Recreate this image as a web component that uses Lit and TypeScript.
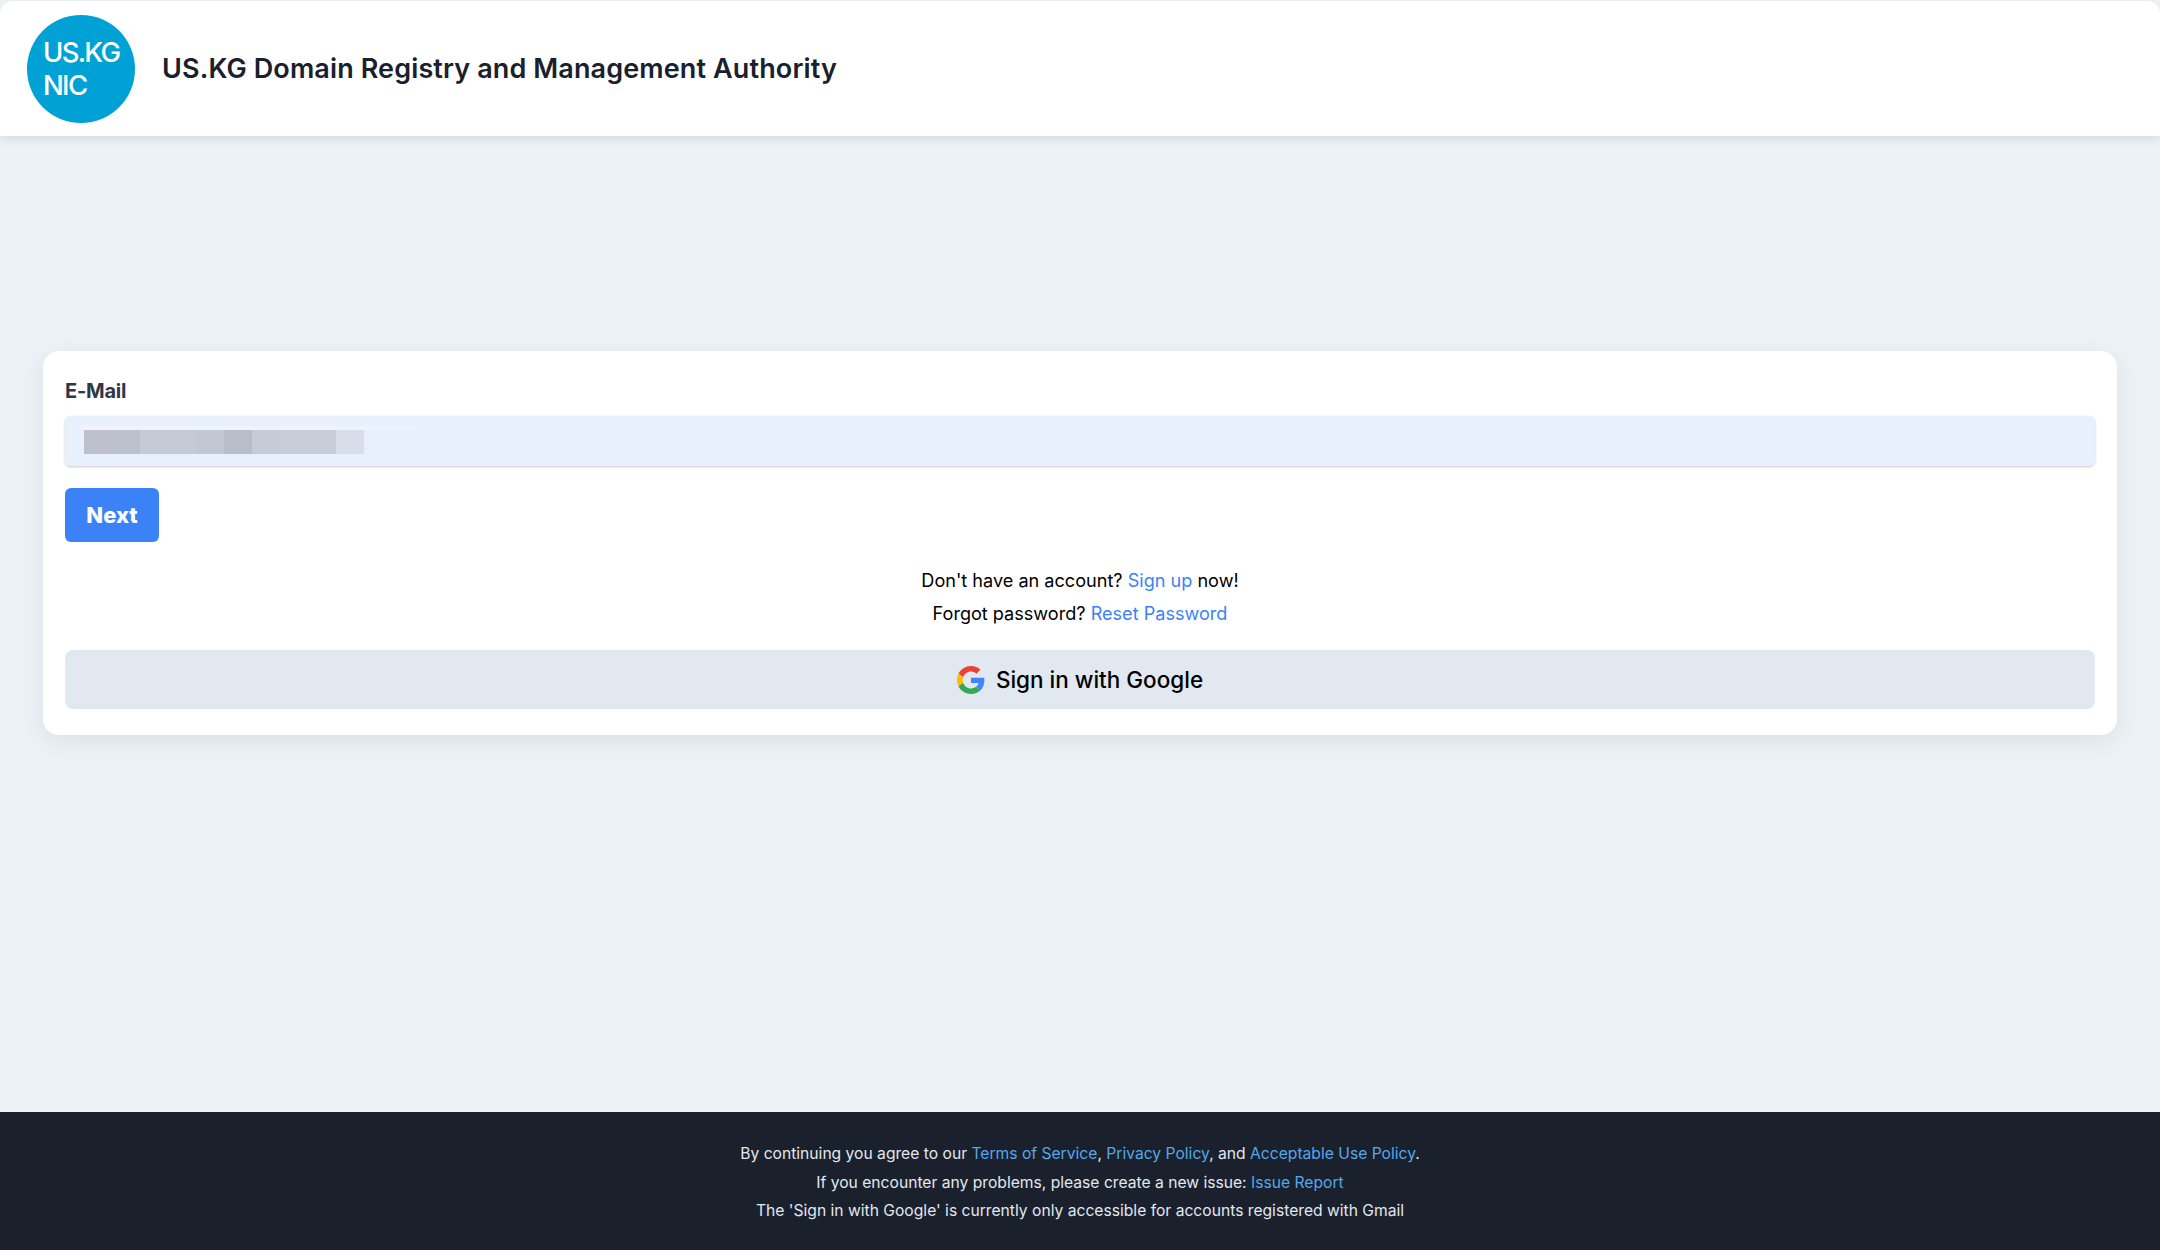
import { LitElement, html, css } from "lit";
import { customElement } from "lit/decorators.js";

const BLOCKS = ["#bec1cc","#bcc1cc","#c5cad6","#c5cad6","#c2c7d4","#b9bdc9","#c6cbd7","#c7ccd8","#c7ccd8","#d8ddea"];

@customElement("app-root")
export class AppRoot extends LitElement {
  static styles = css`
    :host { display: flex; flex-direction: column; height: 1250px; background: #edf2f7; font-family: Inter, "Open Sans", sans-serif; color: #000; overflow: hidden; }
    * { box-sizing: border-box; }
    a { text-decoration: none; }
    header { height: 135px; margin-top: 1px; background: #fff; border-radius: 12px 12px 0 0; display: flex; align-items: center; gap: 27px; padding: 0 27px; box-shadow: 0 4px 10px rgba(0,0,0,.09); flex: none; position: relative; }
    .logo { width: 108px; height: 108px; border-radius: 50%; background: #00a2d6; color: #fff; font-size: 27.5px; font-weight: 500; line-height: 33px; letter-spacing: -1.7px; padding: 21px 0 0 16px; flex: none; }
    h1 { margin: 0; font-size: 27px; font-weight: 600; color: #1a202c; letter-spacing: .12px; padding-bottom: 1px; }
    main { flex: 1; display: flex; align-items: flex-start; padding: 215px 43px 0; }
    .card { width: 100%; background: #fff; border-radius: 16px; padding: 27px 22px 26px; box-shadow: 0 6px 24px rgba(0,0,0,.08); }
    label { display: block; font-size: 20px; font-weight: 700; color: #2d3748; line-height: 27px; letter-spacing: -.25px; }
    .input { margin-top: 11px; height: 50px; background: #e8f0fe; border-radius: 6px; box-shadow: 0 1px 3px rgba(0,0,0,.22); padding: 10px 14px; }
    .red-top { width: 336px; height: 4px; background: #f0f3fb; }
    .red { display: flex; height: 24px; padding-left: 5px; width: 336px; }
    .red i { width: 28px; height: 24px; display: block; }
    .next { display: block; margin-top: 22px; width: 94px; height: 54px; border: 0; border-radius: 6px; background: #3b82f6; color: #fff; font: 800 22px Inter, sans-serif; }
    .links { margin-top: 22px; text-align: center; font-size: 18.1px; line-height: 33px; }
    .links a { color: #3b82f6; }
    .google { margin-top: 20px; height: 59px; border-radius: 8px; background: #e2e8f0; display: flex; align-items: center; justify-content: center; gap: 11px; font-size: 22.5px; font-weight: 500; }
    .google span { margin-top: -1px; }
    footer { flex: none; height: 138px; background: #1a202c; color: #e2e8f0; text-align: center; font-size: 15.65px; line-height: 28.5px; padding-top: 28px; }
    footer a { color: #55a8ea; }
  `;

  render() {
    return html`
      <header>
        <div class="logo">US.KG<br />NIC</div>
        <h1>US.KG Domain Registry and Management Authority</h1>
      </header>
      <main>
        <div class="card">
          <label>E-Mail</label>
          <div class="input">
            <div class="red-top"></div>
            <div class="red">${BLOCKS.map((c) => html`<i style="background:${c}"></i>`)}</div>
          </div>
          <button class="next">Next</button>
          <div class="links">
            <div>Don't have an account? <a href="#">Sign up</a> now!</div>
            <div>Forgot password? <a href="#">Reset Password</a></div>
          </div>
          <div class="google">
            <svg width="28" height="28" viewBox="0 0 48 48">
              <path fill="#EA4335" d="M24 9.5c3.54 0 6.71 1.22 9.21 3.6l6.85-6.85C35.9 2.38 30.47 0 24 0 14.62 0 6.51 5.38 2.56 13.22l7.98 6.19C12.43 13.72 17.74 9.5 24 9.5z"/>
              <path fill="#4285F4" d="M46.98 24.55c0-1.57-.15-3.09-.38-4.55H24v9.02h12.94c-.58 2.96-2.26 5.48-4.78 7.18l7.73 6c4.51-4.18 7.09-10.36 7.09-17.65z"/>
              <path fill="#FBBC05" d="M10.53 28.59c-.48-1.45-.76-2.99-.76-4.59s.27-3.14.76-4.59l-7.98-6.19C.92 16.46 0 20.12 0 24c0 3.88.92 7.54 2.56 10.78l7.97-6.19z"/>
              <path fill="#34A853" d="M24 48c6.48 0 11.93-2.13 15.89-5.81l-7.73-6c-2.15 1.45-4.92 2.3-8.16 2.3-6.26 0-11.57-4.22-13.47-9.91l-7.98 6.19C6.51 42.62 14.62 48 24 48z"/>
            </svg>
            <span>Sign in with Google</span>
          </div>
        </div>
      </main>
      <footer>
        <div>By continuing you agree to our <a href="#">Terms of Service</a>, <a href="#">Privacy Policy</a>, and <a href="#">Acceptable Use Policy</a>.</div>
        <div>If you encounter any problems, please create a new issue: <a href="#">Issue Report</a></div>
        <div>The 'Sign in with Google' is currently only accessible for accounts registered with Gmail</div>
      </footer>
    `;
  }
}
